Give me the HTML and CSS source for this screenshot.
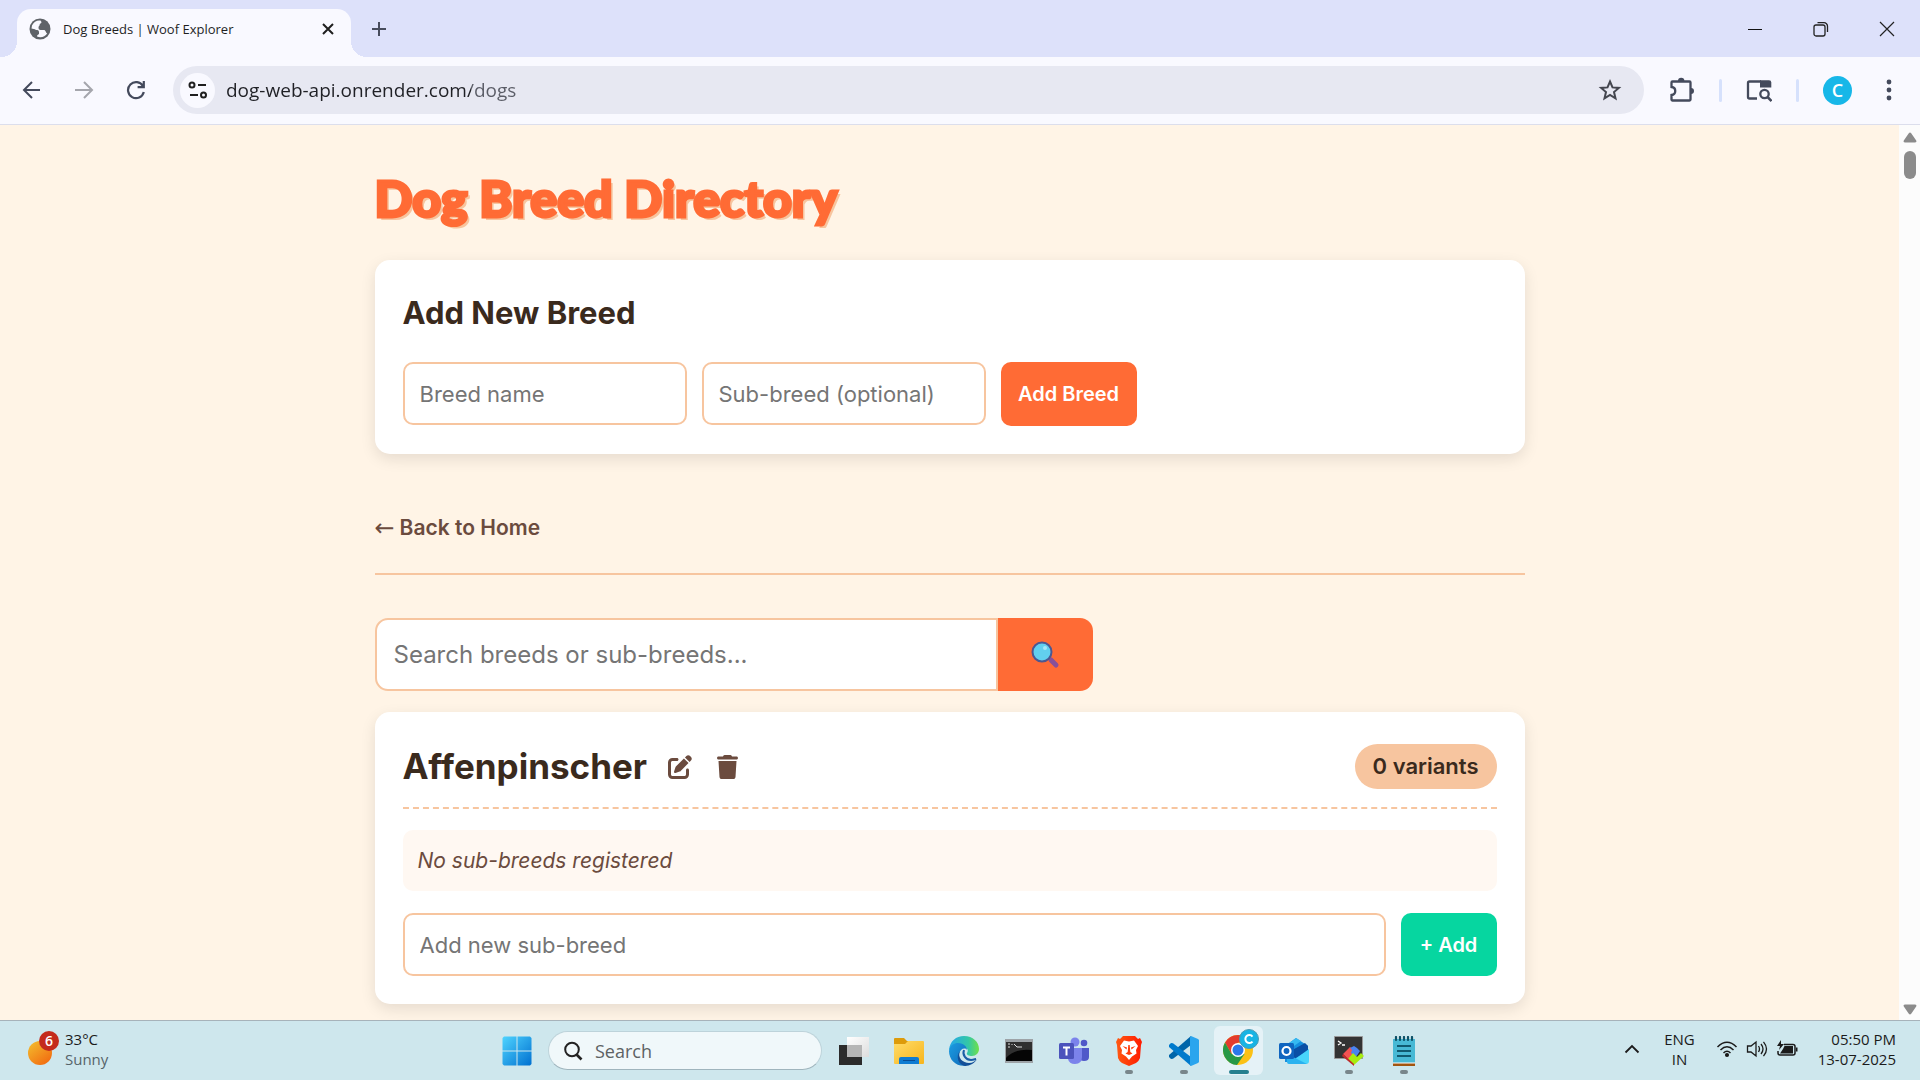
FILE: index.html
```html
<!DOCTYPE html>
<html lang="en">
<head>
<meta charset="utf-8">
<meta name="viewport" content="width=device-width, initial-scale=1">
<title>Dog Breeds | Woof Explorer</title>
<link rel="stylesheet" href="styles.css">
</head>
<body>
<div class="desktop">
  <header class="browser">
    <div class="tabstrip">
      <div class="tab">
        <svg class="favicon" width="22" height="22" viewBox="0 0 22 22"><circle cx="11" cy="11" r="10.500" fill="#5f6368"/><path d="M11.500 2.500C8 2 4.500 4 3 7.500l-.5 3c1.500.5 3 .3 4.500 1.500 1.500 0 3 .2 3 2v2c-1 .8-2 1-2 2.500 4 1.600 8 .2 10.200-3-1.200-.5-1.200-2.500-2.700-3.500h-4c-1.500 0-2-1-2-2.500s1.200-1.500 1.200-3c0-1.300 1.800-.8 1.800-2.500z" fill="#f9f9ff"/></svg>
        <span class="tab-title">Dog Breeds | Woof Explorer</span>
        <button class="icon-btn tab-close" aria-label="Close tab"><svg width="12" height="12" viewBox="0 0 12 12"><path d="M1 1l10 10M11 1L1 11" stroke="#1f1f1f" stroke-width="2"/></svg></button>
      </div>
      <button class="icon-btn new-tab" aria-label="New tab"><svg width="16" height="16" viewBox="0 0 16 16"><path d="M8 1v14M1 8h14" stroke="#474c5c" stroke-width="2"/></svg></button>
      <div class="window-controls">
        <button class="icon-btn" aria-label="Minimize"><svg width="16" height="16" viewBox="0 0 16 16"><path d="M1 8.500h14" stroke="#111"/></svg></button>
        <button class="icon-btn" aria-label="Restore"><svg width="16" height="16" viewBox="0 0 16 16" fill="none" stroke="#222" stroke-width="1.300"><rect x="1" y="4" width="11" height="11" rx="2"/><path d="M4.500 1.700H11a3.500 3.500 0 0 1 3.500 3.500V11"/></svg></button>
        <button class="icon-btn" aria-label="Close"><svg width="16" height="16" viewBox="0 0 16 16"><path d="M1 1l14 14M15 1L1 15" stroke="#222" stroke-width="1.200"/></svg></button>
      </div>
    </div>
    <div class="toolbar">
      <nav class="nav-buttons">
        <button class="icon-btn" aria-label="Back"><svg width="20" height="20" viewBox="0 0 20 20" fill="none" stroke="#444a5c" stroke-width="2"><path d="M18 10H3M10 2l-8 8 8 8"/></svg></button>
        <button class="icon-btn" aria-label="Forward"><svg width="20" height="20" viewBox="0 0 20 20" fill="none" stroke="#a5a6ad" stroke-width="2"><path d="M1 10h16M10 2l8 8-8 8"/></svg></button>
        <button class="icon-btn" aria-label="Reload"><svg width="20" height="20" viewBox="0 0 20 20" fill="none" stroke="#444a5c" stroke-width="2.200"><path d="M17.800 12A8 8 0 1 1 17 6.200M17.800 1v6.200h-6.200"/></svg></button>
      </nav>
      <div class="omnibox">
        <button class="site-info" aria-label="View site information"><svg width="20" height="18" viewBox="0 0 20 18" fill="none" stroke="#1f1f1f" stroke-width="2"><circle cx="4" cy="4" r="2.500"/><path d="M10 4h8M2 14h8"/><circle cx="15.500" cy="14" r="2.500"/></svg></button>
        <input class="url" type="text" aria-label="Address" value="dog-web-api.onrender.com/dogs">
        <button class="icon-btn" aria-label="Bookmark this page"><svg width="24" height="24" viewBox="0 0 24 24" fill="none" stroke="#44464f" stroke-width="2"><path d="M12 3.500l2.500 5.900 6.400.5-4.900 4.200 1.500 6.200L12 17l-5.500 3.300L8 14.100 3.100 9.900l6.400-.5z"/></svg></button>
      </div>
      <div class="actions">
        <button class="icon-btn" aria-label="Extensions"><svg width="26" height="26" viewBox="0 0 26 26"><path d="M3.500 4.500h17a1 1 0 0 1 1 1v17a1 1 0 0 1-1 1h-17a1 1 0 0 1-1-1v-4.500c5-.5 5-7.500 0-8V5.500a1 1 0 0 1 1-1z" fill="none" stroke="#444a5c" stroke-width="2.300"/><path d="M9 4a3.200 3.200 0 0 1 6.400 0zM22 11a3 3 0 0 1 0 6z" fill="#444a5c"/></svg></button>
        <span class="divider"></span>
        <button class="icon-btn" aria-label="Search side panel"><svg width="26" height="24" viewBox="0 0 26 24"><path d="M11 20.500H3.500a1.500 1.500 0 0 1-1.500-1.500V5a1.500 1.500 0 0 1 1.500-1.500H15" fill="none" stroke="#444a5c" stroke-width="2.300"/><path d="M14 2.300h9a2.300 2.300 0 0 1 2.300 2.300V9.500H14z" fill="#444a5c"/><circle cx="18.500" cy="16" r="4.200" fill="none" stroke="#444a5c" stroke-width="2.300"/><path d="M21.500 19l4 4" stroke="#444a5c" stroke-width="2.500"/></svg></button>
        <span class="divider"></span>
        <button class="avatar" aria-label="Profile">C</button>
        <button class="icon-btn menu" aria-label="Menu"><svg width="6" height="22" viewBox="0 0 6 22" fill="#444a5c"><circle cx="3" cy="3" r="2.400"/><circle cx="3" cy="11" r="2.400"/><circle cx="3" cy="19" r="2.400"/></svg></button>
      </div>
    </div>
  </header>

  <div class="viewport">
    <div class="page">
      <main class="container">
        <h1 class="page-title">Dog Breed Directory</h1>
        <section class="card">
          <h2 class="form-title">Add New Breed</h2>
          <form class="row">
            <input class="field breed-field" type="text" placeholder="Breed name" aria-label="Breed name">
            <input class="field breed-field" type="text" placeholder="Sub-breed (optional)" aria-label="Sub-breed (optional)">
            <button class="btn btn-primary" type="button">Add Breed</button>
          </form>
        </section>
        <nav class="back-nav"><a class="back-link" href="#"><span class="back-arrow">←</span> Back to Home</a></nav>
        <form class="search">
          <input class="search-field" type="text" placeholder="Search breeds or sub-breeds..." aria-label="Search breeds or sub-breeds">
          <button class="search-btn" type="button" aria-label="Search"><svg width="30" height="30" viewBox="0 0 30 30"><path d="M19 18l3 3" stroke="#533566" stroke-width="2"/><path d="M21 20l5 5" stroke="#885099" stroke-width="5" stroke-linecap="round"/><circle cx="12" cy="12" r="9.500" fill="#62cfef" stroke="#4c5791" stroke-width="2"/><circle cx="15" cy="8" r="2" fill="#a5e7f7"/></svg></button>
        </form>
        <article class="card">
          <header class="breed-header">
            <h2 class="breed-name">Affenpinscher</h2>
            <button class="icon-btn edit" aria-label="Edit breed"><svg width="24" height="24" viewBox="0 0 512 512" fill="#6b4b3e"><path d="M471.600 21.700c-21.900-21.900-57.300-21.900-79.200 0L362.300 51.700l97.900 97.900 30.100-30.100c21.900-21.900 21.900-57.300 0-79.200L471.600 21.700zm-299.200 220c-6.100 6.100-10.800 13.600-13.500 21.900l-29.600 88.800c-2.900 8.600-.6 18.100 5.800 24.600s15.900 8.700 24.600 5.800l88.800-29.600c8.200-2.700 15.700-7.400 21.900-13.500L437.700 172.300 339.700 74.300 172.400 241.700zM96 64C43 64 0 107 0 160V416c0 53 43 96 96 96H352c53 0 96-43 96-96V320c0-17.700-14.300-32-32-32s-32 14.300-32 32v96c0 17.700-14.300 32-32 32H96c-17.700 0-32-14.300-32-32V160c0-17.700 14.300-32 32-32h96c17.700 0 32-14.300 32-32s-14.300-32-32-32H96z"/></svg></button>
            <button class="icon-btn" aria-label="Delete breed"><svg width="21" height="24" viewBox="0 0 448 512" fill="#6b4b3e"><path d="M135.200 17.700L128 32H32C14.300 32 0 46.300 0 64S14.300 96 32 96H416c17.700 0 32-14.300 32-32s-14.300-32-32-32H320l-7.200-14.300C307.400 6.800 296.300 0 284.200 0H163.800c-12.100 0-23.200 6.800-28.600 17.700zM416 128H32L53.200 467c1.600 25.300 22.600 45 47.900 45H346.900c25.300 0 46.300-19.700 47.900-45L416 128z"/></svg></button>
            <span class="badge">0 variants</span>
          </header>
          <p class="empty">No sub-breeds registered</p>
          <form class="row">
            <input class="field grow" type="text" placeholder="Add new sub-breed" aria-label="Add new sub-breed">
            <button class="btn btn-add" type="button">+ Add</button>
          </form>
        </article>
      </main>
    </div>
    <div class="scrollbar">
      <svg width="14" height="11" viewBox="0 0 14 11" fill="#8b8b8b"><path d="M5.800 1.300L.8 8.500C.2 9.700.8 10.500 2 10.500h10c1.200 0 1.800-.8 1.200-2l-5-7.200c-.7-1-1.700-1-2.400 0z"/></svg>
      <div class="thumb"></div>
      <svg class="down" width="14" height="11" viewBox="0 0 14 11" fill="#8b8b8b"><path d="M5.800 9.700L.8 2.500C.2 1.300.8.500 2 .500h10c1.200 0 1.800.8 1.200 2l-5 7.200c-.7 1-1.700 1-2.400 0z"/></svg>
    </div>
  </div>

  <footer class="taskbar">
    <button class="weather">
      <svg width="34" height="36" viewBox="0 0 34 36"><defs><linearGradient id="sun" x1="0" y1="0" x2=".8" y2="1"><stop offset="0" stop-color="#f3c12f"/><stop offset="1" stop-color="#f26a10"/></linearGradient></defs><circle cx="13" cy="22" r="12" fill="url(#sun)"/><circle cx="22" cy="10" r="10" fill="#c42b1c"/><text x="22" y="15" text-anchor="middle" class="count">6</text></svg>
      <span class="lines"><span>33°C</span><span class="muted">Sunny</span></span>
    </button>
    <div class="apps">
      <button class="app" aria-label="Start"><svg width="30" height="30" viewBox="0 0 30 30"><defs><linearGradient id="win" x1="0" y1="0" x2="1" y2="1"><stop offset="0" stop-color="#4fd4ff"/><stop offset="1" stop-color="#0070d0"/></linearGradient></defs><path d="M2 .5h12.500v14H.500V2zM15.500.5H28L29.500 2v12.500h-14zM.500 15.500h14v14H2L.500 28zM15.500 15.500h14V28L28 29.500H15.500z" fill="url(#win)"/></svg></button>
      <label class="task-search"><svg width="20" height="20" viewBox="0 0 20 20" fill="none" stroke="#222"><circle cx="9" cy="8.500" r="6.800" stroke-width="2"/><path d="M13.500 13.500l5 5" stroke-width="2.600"/></svg><input type="text" placeholder="Search" aria-label="Search"></label>
      <button class="app" aria-label="Task view"><svg width="30" height="30" viewBox="0 0 30 30"><defs><linearGradient id="tv" x1="0" y1="0" x2="1" y2="1"><stop offset="0" stop-color="#fff"/><stop offset="1" stop-color="#ddd"/></linearGradient></defs><path d="M0 9h23v20H0z" fill="#2b2b2b"/><path d="M8 1h22v20H8z" fill="url(#tv)"/><path d="M8 9h15v12H8z" fill="#b5b5b5"/></svg></button>
      <button class="app" aria-label="File Explorer"><svg width="30" height="30" viewBox="0 0 30 30"><defs><linearGradient id="fe" x1="0" y1="0" x2="1" y2="1"><stop offset="0" stop-color="#ffdc6a"/><stop offset="1" stop-color="#f7b51c"/></linearGradient></defs><path d="M0 3q0-1 1-1h9l3 3h16v6H0z" fill="#dd9b0b"/><path d="M0 8h11l3-3h15q1 0 1 1v21q0 1-1 1H1q-1 0-1-1z" fill="url(#fe)"/><path d="M5 28v-5q0-2 2-2h16q2 0 2 2v5z" fill="#0f7cd2"/><path d="M9 24.500h12" stroke="#084c94"/></svg></button>
      <button class="app" aria-label="Microsoft Edge"><svg width="30" height="30" viewBox="0 0 30 30"><defs><linearGradient id="e1"><stop offset=".1" stop-color="#26abe2"/><stop offset=".65" stop-color="#34c8a4"/><stop offset="1" stop-color="#70e04a"/></linearGradient><linearGradient id="e2" x1="0" y1="0" x2="1" y2="1"><stop offset="0" stop-color="#1b9de2"/><stop offset="1" stop-color="#1169b8"/></linearGradient></defs><path d="M0 14C1 5 7 0 15 0c9 0 15 6 15 13 0 4-3 7-7 7-3 0-6-1-5-3 2-3 0-6-4-6-5 0-10 0-14 3z" fill="url(#e1)"/><path d="M0 15c1-6 5-8 9-8 6 0 9 4 9 7-2-3-7-1-8 4-1 6 3 11 8 11.500-10 2-18-5-18-14.500z" fill="url(#e2)"/><path d="M11 15c-3 7 3 12 9 12 4 0 6-2 8-4-2 4-7 7-12 7-6-1-10-9-5-15z" fill="#124f98"/><path d="M15 14c-2 5 2 10 7 10 3 0 4-1 5-1" fill="none" stroke="#1a5da6" stroke-width="2"/></svg></button>
      <button class="app" aria-label="Command Prompt"><svg width="28" height="24" viewBox="0 0 28 24"><path d="M0 0h28v24H0z" fill="#9da3a7"/><path d="M1 3h26v19H1z" fill="#050505"/><path d="M1 3h26v8Q10 9 1 19z" fill="#303030"/><path d="M3 5h2M3 8h2M7 5v1M9 5l3 3M12 8h5" stroke="#ddd" fill="none"/></svg></button>
      <button class="app" aria-label="Microsoft Teams"><svg width="30" height="28" viewBox="0 0 30 28"><circle cx="16" cy="5" r="4.500" fill="#7b83eb"/><circle cx="25" cy="6" r="3.300" fill="#5059c9"/><path d="M20 11h10v9q0 4-5 4-4 0-5-3z" fill="#5059c9"/><path d="M9 11h14v9q0 7-7 7-6 0-7-5z" fill="#7b83eb"/><rect y="6" width="15" height="16" rx="1.500" fill="#4b53bc"/><path d="M4 10.500h7M7.500 10.500v8" stroke="#fff" stroke-width="2"/></svg></button>
      <button class="app running" aria-label="Brave"><svg width="26" height="30" viewBox="0 0 26 30"><defs><linearGradient id="br"><stop offset="0" stop-color="#ff5a13"/><stop offset="1" stop-color="#ff1a00"/></linearGradient></defs><path d="M7 0h12l3 3 2-1 2 4-1 3-1 13q-1 3-4 5l-7 3-7-3q-3-2-4-5L1 9 0 6l2-4 2 1z" fill="url(#br)"/><path d="M8 4.500l5 1 5-1 4 5.500-2 4 .5 3.500-4.500 3-3 3.500-3-3.500-4.500-3L6 14l-2-4z" fill="#fff"/><path d="M6.500 10l4.500 1.500-.5 2zM19.500 10L15 11.500l.5 2zM12.300 9h1.400l.6 7 2.200 1.500L13 19l-3.500-1.500 2.200-1.500z" fill="#ff3c0a"/></svg></button>
      <button class="app running" aria-label="Visual Studio Code"><svg width="30" height="30" viewBox="0 0 30 30"><path d="M22 0l-22 19v2l2 2 2-.3L22 9z" fill="#0065a9"/><path d="M22 30L0 11V9l2-2 2 .3L22 21z" fill="#007acc"/><path d="M22 0l7 3 1 1v22l-1 1-7 3q-1-1-1-2V2q0-1 1-2z" fill="#2aa5ee"/></svg></button>
      <button class="app running active" aria-label="Google Chrome"><svg width="36" height="38" viewBox="0 0 36 38"><g transform="translate(0 6)"><circle cx="15" cy="15" r="15" fill="#fbc116"/><path d="M2 7.500A15 15 0 0 1 28 7.500H15L8.500 19z" fill="#e33b2e"/><path d="M2 7.500a15 15 0 0 0 12 22.500L21.500 19 8.500 19z" fill="#279847"/><circle cx="15" cy="15" r="7" fill="#fff"/><circle cx="15" cy="15" r="5.500" fill="#2b78eb"/></g><circle cx="26" cy="10" r="9.500" fill="#17b4e4" stroke="#4b9bb5"/><path d="M29.500 7.500a4 4 0 1 0 0 5" fill="none" stroke="#fff" stroke-width="2"/></svg></button>
      <button class="app" aria-label="Outlook"><svg width="30" height="28" viewBox="0 0 30 28"><path d="M6 9L17 1l12 8v16H6z" fill="#1590df"/><path d="M6 9L17 1l5 3L8 14z" fill="#35b9f1"/><path d="M29 9v5l-14 8-7-6L26 6z" fill="#0a4fa5"/><path d="M30 12v12q0 3-3 3H9l21-15z" fill="#49d5fb"/><path d="M8 17l20 10H10q-2 0-2-2z" fill="#2bb2ef"/><rect y="6" width="15" height="16" rx="1.500" fill="#0f65c0"/><circle cx="7.500" cy="14" r="4" fill="none" stroke="#fff" stroke-width="2.200"/></svg></button>
      <button class="app running" aria-label="Git terminal"><svg width="30" height="30" viewBox="0 0 30 30"><path d="M.5.500h28v22H.500z" fill="#333" stroke="#999"/><path d="M4 5l3 2-3 2M8 9h3" fill="none" stroke="#fff" stroke-width="1.300"/><path d="M9 18l7-7 4 3-2 4 3 2-5 5z" fill="#f35252"/><path d="M16 12l4-2 3 2 3 3-4 6-5-4 1-3z" fill="#4a83f0"/><path d="M14 23l5-6 4 4 4-4 3 3-10 9z" fill="#a7ed10"/><path d="M9 18l11 10v2L8 20z" fill="#bd2b2b"/></svg></button>
      <button class="app running" aria-label="Notepad"><svg width="24" height="30" viewBox="0 0 24 30"><path d="M1 27h22v3H1z" fill="#a25510"/><path d="M1 3h22v24H1z" fill="#48b9d5"/><path d="M1 27h22" stroke="#fff"/><path d="M5 10h14M5 15h14M5 20h14" stroke="#105a70" stroke-width="2"/><path d="M4 1v3M8 1v3M12 1v3M16 1v3M20 1v3" stroke="#0d5268" stroke-width="2.200" stroke-linecap="round"/></svg></button>
    </div>
    <div class="tray">
      <button class="icon-btn" aria-label="Show hidden icons"><svg width="16" height="10" viewBox="0 0 16 10"><path d="M1.500 8.500L8 2l6.500 6.500" fill="none" stroke="#1b1b1b" stroke-width="1.800"/></svg></button>
      <button class="lines lang"><span>ENG</span><span>IN</span></button>
      <button class="status" aria-label="Network, volume and battery">
        <svg width="22" height="18" viewBox="0 0 22 18" fill="none" stroke="#1b1b1b" stroke-width="1.500"><path d="M1.500 7q9.500-9.500 19 0M4.500 10q6.500-6.500 13 0M7.500 13q3.500-3.500 7 0"/><circle cx="11" cy="15" r="1.300" fill="#1b1b1b"/></svg>
        <svg width="22" height="18" viewBox="0 0 22 18" fill="none" stroke="#1b1b1b" stroke-width="1.300"><path d="M1.500 6h3.500l5-4v14l-5-4H1.500zM12.500 6q2 3 0 6M15 4q4 5 0 10M17.500 1.800q6 7.200 0 14.400"/></svg>
        <svg width="22" height="18" viewBox="0 0 22 18"><path d="M8 4.500h9a2 2 0 0 1 2 2V13a2 2 0 0 1-2 2H4a2 2 0 0 1-2-2v-2" fill="none" stroke="#1b1b1b" stroke-width="1.500"/><path d="M8.500 6H17v7.500H4L7 9zM20 7.500h1.500v4H20zM5 0L1 6h3L3 10l5-6H5z" fill="#1b1b1b"/></svg>
      </button>
      <button class="lines clock"><span>05:50 PM</span><span>13-07-2025</span></button>
    </div>
  </footer>
</div>
</body>
</html>
```
FILE: styles.css
```css
* { box-sizing: border-box; }
body { margin: 0; font-family: Inter, sans-serif; color: #3a2a1d; }
button, input { font: inherit; color: inherit; border: 0; background: none; padding: 0; margin: 0; min-width: 0; outline: 0; }
button { cursor: pointer; }
svg { display: block; flex: none; }
h1, h2, p { margin: 0; }

.desktop { display: flex; flex-direction: column; height: 100vh; overflow: hidden; }
.icon-btn { display: grid; place-items: center; flex: none; }

/* Browser frame */
.browser { flex: none; font-family: "Open Sans", sans-serif; }
.tabstrip { display: flex; align-items: stretch; height: 57px; padding-left: 17px; background: #dde1fa; }
.tab { position: relative; display: flex; align-items: center; width: 334px; margin-top: 9px; padding: 0 17px 8px 12px; border-radius: 14px 14px 0 0; background: #f9f9ff; color: #1f1f1f; }
.tab::before, .tab::after { content: ""; position: absolute; bottom: 0; width: 16px; height: 16px; }
.tab::before { right: 100%; background: radial-gradient(circle at 0 0, transparent 16px, #f9f9ff 16px); }
.tab::after { left: 100%; background: radial-gradient(circle at 100% 0, transparent 16px, #f9f9ff 16px); }
.tab-title { flex: 1; margin-left: 12px; font-size: 13px; line-height: 20px; white-space: nowrap; }
.new-tab { width: 56px; }
.window-controls { display: flex; margin-left: auto; }
.window-controls .icon-btn { width: 66px; }

.toolbar { display: flex; align-items: center; height: 68px; padding-bottom: 1px; background: #f9f9ff; border-bottom: 1px solid #dcdeec; }
.nav-buttons { display: flex; padding-left: 6px; }
.nav-buttons .icon-btn { width: 52px; height: 40px; }
.omnibox { flex: 1; display: flex; align-items: center; height: 48px; margin-left: 11px; padding: 0 22px 0 7px; border-radius: 24px; background: #e7e8f2; }
.site-info { display: grid; place-items: center; flex: none; width: 35px; height: 35px; border-radius: 50%; background: #f9f9ff; }
.url { flex: 1; margin-left: 11px; font-size: 19px; line-height: 28px; color: transparent; background: linear-gradient(to right, #1f2025 245px, #5a5c66 245px); background-clip: text; -webkit-background-clip: text; }
.actions { display: flex; align-items: center; gap: 24px; padding: 0 28px 0 25px; }
.divider { width: 3px; height: 23px; border-radius: 2px; background: #d6e1fc; }
.avatar { width: 29px; height: 29px; border-radius: 50%; background: #17b7e8; color: #fff; font-size: 18px; font-weight: 600; line-height: 28px; }
.menu { margin-left: 10px; }

/* Page area */
.viewport { flex: 1; display: flex; min-height: 0; }
.page { flex: 1; overflow: hidden; background: #fff4e6; }
.container { max-width: 1150px; margin: 0 auto; padding: 37px 0 40px; }
.page-title { margin-bottom: 26px; font-family: Lato, sans-serif; font-size: 50px; font-weight: 900; line-height: 72px; color: #ff6b35; text-shadow: 3px 3px 0 #f7c59f; -webkit-text-stroke: 3px #ff6b35; white-space: nowrap; }
.card { padding: 28px; border-radius: 15px; background: #fff; box-shadow: 0 5px 15px rgba(0, 0, 0, .1); }
.form-title { margin-bottom: 24px; font-size: 31px; font-weight: 700; line-height: 50px; }
.row { display: flex; gap: 15px; }
.field { height: 63px; padding: 0 15px; border: 2px solid #f7c59f; border-radius: 10px; background: #fff; font-size: 22px; }
.field::placeholder, .search-field::placeholder { color: #757575; opacity: 1; }
.breed-field { width: 284px; }
.grow { flex: 1; }
.btn { border-radius: 10px; color: #fff; font-size: 20px; font-weight: 600; }
.btn-primary { width: 136px; height: 64px; background: #ff6b35; }
.btn-add { width: 96px; background: #06d6a0; }
.back-nav { margin: 59px 0 43px; padding-bottom: 30px; border-bottom: 2px solid #f7c59f; }
.back-link { display: flex; align-items: center; gap: 5px; color: #6b4b3e; font-size: 21px; font-weight: 600; line-height: 30px; text-decoration: none; }
.back-arrow { font-family: "DejaVu Sans", sans-serif; font-size: 24px; font-weight: 400; }
.search { display: flex; max-width: 718px; height: 73px; margin-bottom: 21px; }
.search-field { flex: 1; padding: 0 17px; border: 2px solid #f7c59f; border-radius: 13px 0 0 13px; background: #fff; font-size: 24px; }
.search-btn { display: grid; place-items: center; width: 95px; border-radius: 0 13px 13px 0; background: #ff6b35; }
.breed-header { display: flex; align-items: center; margin-bottom: 21px; padding-bottom: 14px; border-bottom: 2px dashed #f7c59f; }
.breed-name { font-size: 35px; font-weight: 700; line-height: 53px; }
.edit { margin: 0 25px 0 21px; }
.badge { margin-left: auto; padding: 0 18px; border-radius: 23px; background: #f7c59f; font-size: 22px; font-weight: 600; line-height: 45px; }
.empty { margin-bottom: 22px; padding: 0 15px; border-radius: 10px; background: #fff8f2; color: #6b4b3e; font-size: 21px; font-style: italic; line-height: 61px; }

.scrollbar { display: flex; flex-direction: column; align-items: center; flex: none; width: 21px; padding: 7px 0 5px; background: #fcfcfc; }
.thumb { width: 12px; height: 28px; margin-top: 8px; border-radius: 6px; background: #8b8b8b; }
.down { margin-top: auto; }

/* Taskbar */
.taskbar { display: grid; grid-template-columns: 1fr auto 1fr; flex: none; height: 60px; border-top: 1px solid #a7b3ba; background: #cee7ed; color: #1b1b1b; font-family: "Open Sans", sans-serif; font-size: 15px; }
.weather { display: flex; align-items: center; gap: 4px; justify-self: start; padding: 0 27px 4px; text-align: left; }
.count { fill: #fff; font-size: 14px; font-weight: 600; }
.lines { display: flex; flex-direction: column; line-height: 20px; }
.muted { color: #56646a; }
.apps { display: flex; align-items: center; }
.app { position: relative; display: grid; place-items: center; width: 55px; height: 59px; }
.running::after { content: ""; position: absolute; bottom: 6px; left: 50%; width: 8px; height: 4px; margin-left: -4px; border-radius: 2px; background: #78868b; }
.active { width: 49px; height: 49px; margin: 0 3px; border-radius: 6px; background: #e5f2f7; }
.active svg { margin: -5px 0 0 5px; }
.active::after { bottom: 1px; width: 20px; margin-left: -10px; background: #26808f; }
.task-search { display: flex; align-items: center; gap: 12px; width: 274px; height: 39px; margin: 0 4px; padding: 0 14px; border: 1px solid #bdd3da; border-bottom-color: #9fb5bd; border-radius: 20px; background: #f0f8fa; }
.task-search input { flex: 1; font-size: 18px; }
.task-search input::placeholder { color: #5d6264; opacity: 1; }
.tray { display: flex; align-items: center; justify-self: end; padding: 0 24px 3px 0; }
.lang { margin-left: 24px; text-align: center; }
.status { display: flex; gap: 8px; margin: 0 20px 0 21px; }
.clock { text-align: right; }
```
